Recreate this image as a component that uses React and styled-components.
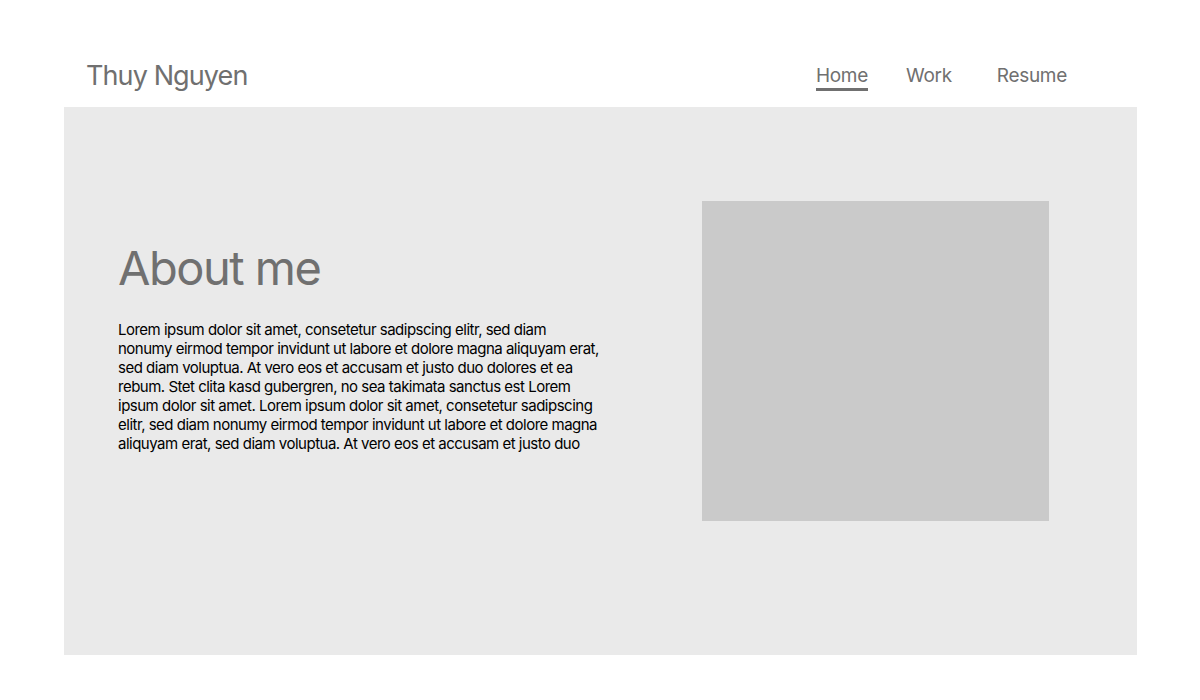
import React from "react";
import styled, { createGlobalStyle } from "styled-components";

const Global = createGlobalStyle`
  html, body { margin: 0; padding: 0; background: #ffffff; }
  body { font-family: Inter, "Liberation Sans", sans-serif; }
`;

const Page = styled.div`
  width: 1073px;
  margin-left: 64px;
`;

const Header = styled.header`
  height: 107px;
  display: flex;
  align-items: flex-end;
  justify-content: space-between;
  box-sizing: border-box;
  padding: 0 70px 16px 22px;
`;

const Brand = styled.div`
  font-size: 27px;
  letter-spacing: -0.9px;
  color: #707070;
  line-height: 30px;
`;

const Nav = styled.nav`
  display: flex;
  align-items: flex-end;
  gap: 38px;
`;

const NavLink = styled.a`
  font-size: 19px;
  letter-spacing: -0.3px;
  color: #707070;
  line-height: 22px;
  padding-bottom: 1px;
  border-bottom: 3px solid ${(p) => (p.$active ? "#707070" : "transparent")};
  margin-left: ${(p) => p.$extra || 0}px;
  cursor: pointer;
`;

const Panel = styled.section`
  height: 548px;
  background: #eaeaea;
  display: flex;
  align-items: flex-start;
  justify-content: space-between;
  box-sizing: border-box;
  padding: 0 88px 0 54px;
`;

const TextCol = styled.div`
  width: 483px;
  padding-top: 132px;
`;

const Heading = styled.h1`
  margin: 0 0 24px;
  font-size: 47px;
  font-weight: 400;
  line-height: 57px;
  letter-spacing: -1.5px;
  color: #707070;
`;

const Body = styled.p`
  margin: 0;
  font-size: 15px;
  line-height: 19px;
  letter-spacing: -0.5px;
  color: #000000;
`;

const ImageBox = styled.div`
  width: 347px;
  height: 320px;
  margin-top: 94px;
  background: #cacaca;
`;

export default function App() {
  return (
    <>
      <Global />
      <Page>
        <Header>
          <Brand>Thuy Nguyen</Brand>
          <Nav>
            <NavLink $active>Home</NavLink>
            <NavLink>Work</NavLink>
            <NavLink $extra={7}>Resume</NavLink>
          </Nav>
        </Header>
        <Panel>
          <TextCol>
            <Heading>About me</Heading>
            <Body>
              Lorem ipsum dolor sit amet, consetetur sadipscing elitr, sed diam
              nonumy eirmod tempor invidunt ut labore et dolore magna aliquyam
              erat, sed diam voluptua. At vero eos et accusam et justo duo dolores
              et ea rebum. Stet clita kasd gubergren, no sea takimata sanctus est
              Lorem ipsum dolor sit amet. Lorem ipsum dolor sit amet, consetetur
              sadipscing elitr, sed diam nonumy eirmod tempor invidunt ut labore
              et dolore magna aliquyam erat, sed diam voluptua. At vero eos et
              accusam et justo duo
            </Body>
          </TextCol>
          <ImageBox />
        </Panel>
      </Page>
    </>
  );
}
